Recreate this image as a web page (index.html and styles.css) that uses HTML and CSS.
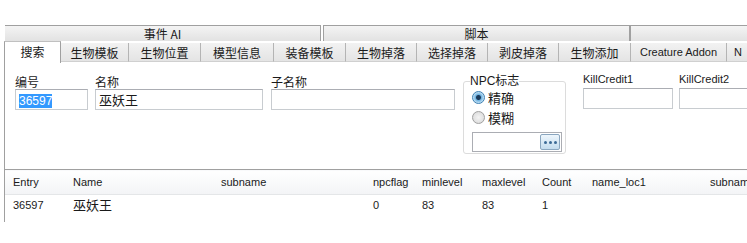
FILE: index.html
```html
<!DOCTYPE html>
<html lang="zh">
<head>
  <meta charset="UTF-8">
  <title>生物搜索</title>
  <link rel="stylesheet" href="styles.css">
</head>
<body>
  <div class="window">
    <div class="groups">
      <div class="group g1">事件 AI</div>
      <div class="group g2">脚本</div>
      <div class="group g3"></div>
    </div>
    <div class="tabs">
      <div class="tab active" style="width:57px">搜索</div>
      <div class="tab" style="width:68px">生物模板</div>
      <div class="tab" style="width:72px">生物位置</div>
      <div class="tab" style="width:73px">模型信息</div>
      <div class="tab" style="width:72px">装备模板</div>
      <div class="tab" style="width:71px">生物掉落</div>
      <div class="tab" style="width:71px">选择掉落</div>
      <div class="tab" style="width:71px">剥皮掉落</div>
      <div class="tab" style="width:72px">生物添加</div>
      <div class="tab latin" style="width:96px">Creature Addon</div>
      <div class="tab latin tab-cut">N</div>
    </div>
    <div class="panel">
      <div class="search">
        <div class="field f-entry">
          <label>编号</label>
          <div class="input"><span class="sel">36597</span></div>
        </div>
        <div class="field f-name">
          <label>名称</label>
          <div class="input">巫妖王</div>
        </div>
        <div class="field f-sub">
          <label>子名称</label>
          <div class="input"></div>
        </div>
        <fieldset class="npcflag">
          <legend>NPC标志</legend>
          <div class="radio"><span class="dot on"></span>精确</div>
          <div class="radio"><span class="dot"></span>模糊</div>
          <div class="picker">
            <div class="picker-box"></div>
            <div class="picker-btn"><i></i><i></i><i></i></div>
          </div>
        </fieldset>
        <div class="field f-kc1">
          <label class="latin">KillCredit1</label>
          <div class="input"></div>
        </div>
        <div class="field f-kc2">
          <label class="latin">KillCredit2</label>
          <div class="input"></div>
        </div>
      </div>
      <table class="grid">
        <thead>
          <tr>
            <th style="width:52px">Entry</th>
            <th style="width:140px">Name</th>
            <th style="width:144px">subname</th>
            <th style="width:41px">npcflag</th>
            <th style="width:52px">minlevel</th>
            <th style="width:52px">maxlevel</th>
            <th style="width:42px">Count</th>
            <th style="width:110px">name_loc1</th>
            <th>subname_loc1</th>
          </tr>
        </thead>
        <tbody>
          <tr>
            <td>36597</td>
            <td class="cjk">巫妖王</td>
            <td></td>
            <td>0</td>
            <td>83</td>
            <td>83</td>
            <td>1</td>
            <td></td>
            <td></td>
          </tr>
        </tbody>
      </table>
    </div>
  </div>
</body>
</html>
```

FILE: styles.css
```css
body {
  margin: 0;
  background: #ffffff;
  font-family: 'Noto Sans CJK SC', sans-serif;
  font-size: 12px;
  color: #1a1a1a;
  overflow: hidden;
}
.window {
  width: 747px;
  height: 243px;
  padding-top: 25px;
  box-sizing: border-box;
  white-space: nowrap;
  overflow: hidden;
}
.latin {
  font-family: 'Liberation Sans', sans-serif;
}
.groups {
  display: flex;
  margin-left: 5px;
  height: 16px;
}
.group {
  height: 15px;
  line-height: 16px;
  text-align: center;
  border-top: 1px solid #a0a0a0;
  border-right: 1px solid #a0a0a0;
  background: linear-gradient(#f4f4f4, #e2e2e2);
  box-sizing: content-box;
  font-size: 12px;
}
.g1 { width: 315px; }
.g2 { width: 305px; margin-left: 2px; border-left: 1px solid #a0a0a0; }
.g3 { flex: 1; border-right: none; border-left: 1px solid #a0a0a0; }
.tabs {
  display: flex;
  align-items: flex-end;
  margin-left: 5px;
  height: 21px;
}
.tab {
  flex: none;
  height: 19px;
  line-height: 19px;
  text-align: center;
  box-sizing: border-box;
  border-right: 1px solid #b4b4b4;
  border-bottom: 1px solid #d0d0d0;
  background: linear-gradient(#f2f2f2, #e4e4e4);
  font-size: 12px;
  overflow: hidden;
}
.tab.latin {
  font-size: 11px;
}
.tab-cut {
  width: 40px;
  text-align: left;
  padding-left: 7px;
}
.tab.active {
  height: 22px;
  line-height: 20px;
  background: #ffffff;
  border-left: 1px solid #a0a0a0;
  border-top: 1px solid #c0c0c0;
  border-right: 1px solid #a0a0a0;
  border-bottom: none;
  margin-bottom: -1px;
  margin-left: -1px;
}
.panel {
  margin-left: 4px;
  border-left: 1px solid #a0a0a0;
  height: 160px;
}
.search {
  display: flex;
  align-items: flex-start;
  height: 107px;
  padding-top: 13px;
  box-sizing: border-box;
}
.search > * {
  flex: none;
}
.field label {
  display: block;
  height: 14px;
  line-height: 14px;
  margin-bottom: 0;
  font-size: 12px;
}
.field label.latin {
  font-size: 11px;
}
.input {
  height: 21px;
  line-height: 19px;
  box-sizing: border-box;
  border: 1px solid #c8ccd0;
  border-top-color: #abadb3;
  padding: 0 3px;
  font-size: 13px;
}
.sel {
  background: #3399ff;
  color: #ffffff;
  font-family: 'Liberation Sans', sans-serif;
  font-size: 12px;
}
.f-entry { margin-left: 10px; width: 73px; }
.f-name { margin-left: 7px; width: 168px; }
.f-sub { margin-left: 8px; width: 184px; }
.f-kc1 { margin-left: 17px; width: 90px; margin-top: -3px; }
.f-kc1 .input, .f-kc2 .input { margin-top: 2px; }
.f-kc2 { margin-left: 6px; width: 80px; margin-top: -3px; }
.npcflag {
  margin: 0 0 0 8px;
  padding: 0 0 0 8px;
  width: 103px;
  height: 79px;
  box-sizing: border-box;
  border: 1px solid #dcdcdc;
  border-radius: 3px;
}
.npcflag legend {
  padding: 0;
  margin-left: -2px;
  font-family: 'Liberation Sans', 'Noto Sans CJK SC', sans-serif;
  font-size: 12px;
  line-height: 12px;
}
.radio {
  display: flex;
  align-items: center;
  height: 20px;
  margin-top: 0;
  font-size: 13px;
}
.dot {
  width: 11px;
  height: 11px;
  border-radius: 50%;
  border: 1px solid #a0a0a0;
  background: radial-gradient(#f4f4f4, #d6d6d6);
  margin-right: 3px;
  box-sizing: content-box;
}
.dot.on {
  border-color: #3c7fb1;
  background: radial-gradient(circle, #1c3a5a 0 2px, #6fb3e0 3px, #d8ecfa 6px);
}
.picker {
  display: flex;
  margin-top: 5px;
  width: 90px;
  height: 20px;
  border: 1px solid #abadb3;
  box-sizing: border-box;
}
.picker-box {
  flex: 1;
}
.picker-btn {
  width: 20px;
  height: 16px;
  margin: 1px 1px 0 0;
  border: 1px solid #8aa6bf;
  border-radius: 2px;
  background: linear-gradient(#eef6fc, #c4dcee);
  display: flex;
  justify-content: center;
  align-items: center;
  gap: 2px;
  box-sizing: border-box;
}
.picker-btn i {
  width: 3px;
  height: 3px;
  border-radius: 50%;
  background: #3b6a96;
}
.grid {
  border-collapse: collapse;
  table-layout: fixed;
  width: 790px;
  border-top: 1px solid #a0a0a0;
  font-family: 'Liberation Sans', sans-serif;
  font-size: 11px;
}
.grid th {
  text-align: left;
  font-weight: normal;
  height: 24px;
  padding: 0 0 0 8px;
  background: linear-gradient(#ffffff, #f3f4f6);
  border-bottom: 1px solid #e4e6e8;
  overflow: hidden;
}
.grid td {
  height: 19px;
  padding: 0 0 0 8px;
  overflow: hidden;
}
.grid td.cjk {
  font-family: 'Noto Sans CJK SC', sans-serif;
  font-size: 13px;
}
```
